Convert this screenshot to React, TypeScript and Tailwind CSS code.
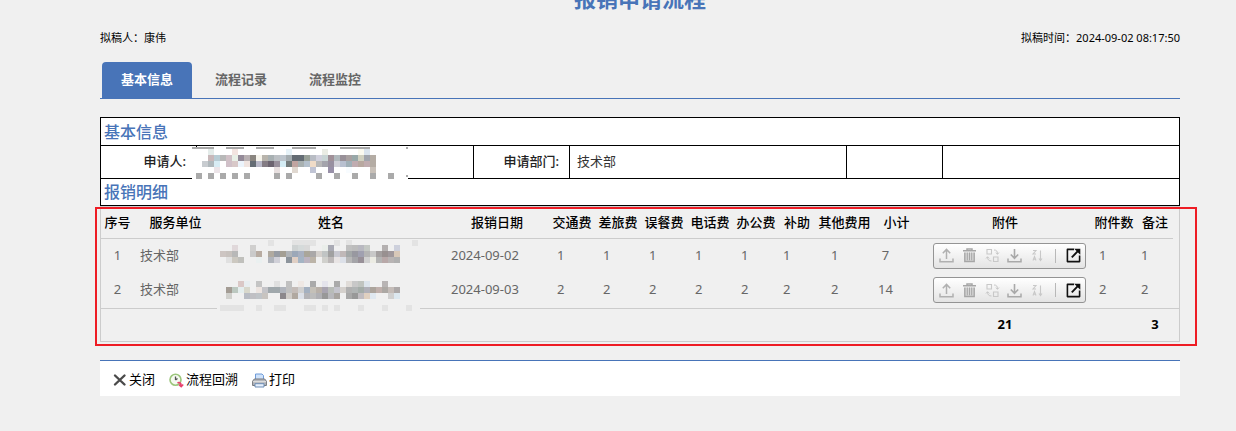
import type { ReactNode } from 'react'

type MosaicRow = { y: number; col: number; cells: string }

// each row lists its cells from left to right, "-" leaves a cell empty
const applicantMosaic: MosaicRow[] = [
  { y: 2, col: 1, cells: 'e4ecea - - - f3e4e0 - - - - - - - - e6f2f8 - - - - - eaece4 - - - - - fbfaf0 dae4ee' },
  { y: 8, col: 1, cells: 'c8b8ba b8ccd4 b8b8b8 d0c0c6 e8efe6 948a98 b8b0b2 8a8580 f6f4ec b8b4ac a8b0b2 bcc0c4 bcc4cc a4acb0 636b73 646c74 98a098 b8bcc4 d0d0dc c8d4d4 a09098 b0b8bc 989098 a8a0a0 98a8a8 d0d0c0 a0a4ac b4aca4' },
  { y: 14, col: 0, cells: 'c8ccd0 b0b8bc d8ecf4 - d0c0c8 d8c8c8 ecf4fc f0e4e0 646c74 b8b8c8 847c84 6c6470 98909c d4ecf4 747c7c c0a4a0 a8b0b0 b4c0cc f0dcc8 b8b8b8 a4a4ac 9890a0 d0d0d8 b8c0d0 a0b0b8 c0acb0 b8a8a0 c0acb0 b4aca4' },
  { y: 20, col: 2, cells: 'ece4e8 - - - - - - - - - e8e0e0 - - e0d8d0 - - c0c4d4 - - 9890a8 - - f8fcff - - - c8c0b8' },
  { y: 26, col: -1, cells: 'aaa - aaa - aaa - aaa - aaa - - - - aaa - aaa - - - - aaa - - aaa - - aaa - - aaa - - aaa' },
]

const nameMosaic: MosaicRow[] = [
  { y: 1, col: 8, cells: 'e3e3e3 - - - e3e3e3 e3e3e3 e3e3e3 e3e3e3 - - - e3e3e3 - e3e3e3 - - - - - - - - - - e3e3e3' },
  { y: 6, col: 2, cells: 'e0d8da - - d0cfce - - - - - - cfd3d3 d5dada d9d9d9 - - eaeeea a9aab4 - - c0c0c0 bcbcbc b8b8c0 c4c8c4 - - b4b0b0 - cdd0dc' },
  { y: 12, col: 0, cells: 'cdc5c2 c8c2be b8b8b8 - - cacaca b8aca2 - b0aaa0 979ca4 a49f94 b0b4b8 9ca8b8 a8b0c0 aaa69a aaa8a8 d4d0cc c0c4c4 a0a0a0 c8c8d0 c0b8b8 a4a8a8 9898a0 a0a0b0 b4b4b4 c8c8c8 a4a0a0 989090 a0989c d8c8b8' },
  { y: 18, col: 1, cells: 'e0e0e0 ccc8c0 c0c0bc - - eaf0f0 - b0b4bc d0d0d8 - 8c949c e0cfc4 a4b4c4 bcb4c0 bcb4a8 - d0d0cc bcb8b8 e8e4e4 dce0e8 b8b8b8 a4a4a8 989098 d0d0d0 ecece4 b4b4b4 b8a8a8 b8b4b4 b0b0b0' },
  { y: 42, col: 3, cells: 'dac8c6 e8eef0 - c4c4c4 - - e0e0e0 - c0c0c0 - efe8e4 - aaaaaa - e4e4ec - aaaaaa - e0dcd8 c8c8c8 c0c4c0 dce4ec - - b8b4b4' },
  { y: 48, col: 1, cells: 'a39c94 bcc8c0 e4eeee d8d8cc - ece4e0 c4c4c8 a0a8ac a0a8ac b0b4bc c0c0c0 c4bcb8 d0d0d0 a4b0c0 c4c0b8 b8b0a8 a8a4b0 b8bcb8 c4c4cc d4d0cc b0b0b0 b0b4b4 a4aca8 b0b0b8 aca49c c0b0ac aca8a4 c4bcb8 aca8a8' },
  { y: 54, col: 1, cells: 'd0d0cc - - b8bcc4 c0c0c4 c0c4c8 c8c4c0 - - 8c888c d0ccc8 b0a8a0 dce0e8 b4b4b8 bcbcbc b0b0b4 989898 b8b8bc a8a4a0 - a8a8a8 989898 c0bcc0 e0d0c0 e0e8f0 - - d0d0d0 dce8f0' },
  { y: 66, col: 0, cells: 'e3e3e3 e3e3e3 e3e3e3 e3e3e3 - - e3e3e3 - - e3e3e3 e3e3e3 - - - e3e3e3 e3e3e3 - e3e3e3 - e3e3e3 - - - e3e3e3 - - - e3e3e3 - - - e3e3e3' },
]

function MosaicCells({ rows, offset }: { rows: MosaicRow[]; offset: number }) {
  return (
    <>
      {rows.map((row) =>
        row.cells.split(' ').map((fill, i) =>
          fill === '-' ? null : (
            <rect key={`${row.y}-${i}`} x={offset + (row.col + i) * 6} y={row.y} width="6" height="6" fill={`#${fill}`} />
          ),
        ),
      )}
    </>
  )
}

const columns = [
  { label: '序号', width: 'w-[33px]' },
  { label: '服务单位', width: 'w-[83px]' },
  { label: '姓名', width: '' },
  { label: '报销日期', width: 'w-[104px]' },
  { label: '交通费', width: 'w-[46px]' },
  { label: '差旅费', width: 'w-[46px]' },
  { label: '误餐费', width: 'w-[46px]' },
  { label: '电话费', width: 'w-[46px]' },
  { label: '办公费', width: 'w-[46px]' },
  { label: '补助', width: 'w-[36px]' },
  { label: '其他费用', width: 'w-[59px]' },
  { label: '小计', width: 'w-[45px]' },
  { label: '附件', width: 'w-[172px]' },
  { label: '附件数', width: 'w-[46px]' },
  { label: '备注', width: 'w-[36px]' },
]

const feePadding = ['pl-2', 'pl-2', 'pl-2', 'pl-2', 'pl-2', 'pl-1', 'pl-4']

const records = [
  { id: 1, unit: '技术部', date: '2024-09-02', fees: [1, 1, 1, 1, 1, 1, 1], subtotal: 7, files: 1, remark: 1 },
  { id: 2, unit: '技术部', date: '2024-09-03', fees: [2, 2, 2, 2, 2, 2, 2], subtotal: 14, files: 2, remark: 2 },
]

function ToolButton({ label, children }: { label: string; children: ReactNode }) {
  return (
    <button type="button" aria-label={label} className="flex h-6 w-[23px] items-center justify-center">
      <svg width="15" height="15" viewBox="0 0 15 15" fill="none">
        {children}
      </svg>
    </button>
  )
}

function AttachmentTools() {
  return (
    <div className="ml-3.5 flex h-[26px] w-[153px] items-center rounded-[3px] border border-[#949494] bg-linear-to-b from-white to-[#e4e4e4] pl-px">
      <ToolButton label="上传">
        <path d="M7.5 11V1.5M3.8 5.2l3.7-3.8 3.7 3.8" stroke="#b0b0b0" strokeWidth="1.5" />
        <path d="M1 10.5v3.2h13v-3.2" stroke="#b0b0b0" strokeWidth="1.5" />
      </ToolButton>
      <ToolButton label="删除">
        <path d="M1 2.8h13M5 2.5V1h5v1.5" stroke="#a6a6a6" strokeWidth="1.5" />
        <path d="M2.8 4.5v9h9.4v-9" fill="#d6d6d6" stroke="#a6a6a6" strokeWidth="1.4" />
        <path d="M5.3 4.5v7.8M7.5 4.5v7.8M9.7 4.5v7.8" stroke="#a6a6a6" />
      </ToolButton>
      <ToolButton label="替换">
        <path d="M2 1.5h4.5v4.5H2zM8.5 9H13v4.5H8.5z" stroke="#c8c8c8" strokeWidth="1.1" />
        <path d="M9 2c2.5 0 3.5 1.2 3.5 4M10.7 4.5l1.8 1.8 1.5-1.8M6.5 13C4 13 2.5 11.8 2.5 9M1 10.5l1.5-1.8 1.8 1.8" stroke="#c8c8c8" />
      </ToolButton>
      <ToolButton label="下载">
        <path d="M7.5 1v9M3.8 6.5l3.7 3.8 3.7-3.8" stroke="#a9a9a9" strokeWidth="1.6" />
        <path d="M1 10.5v3.2h13v-3.2" stroke="#a9a9a9" strokeWidth="1.5" />
      </ToolButton>
      <ToolButton label="排序">
        <path d="M3 2.5h3L3 6h3M3 12.5l1.5-4 1.5 4M3.5 11.3h2M10.5 2.5V12M9 10.5l1.5 2 1.5-2" stroke="#c8c8c8" strokeWidth="1.1" />
      </ToolButton>
      <span className="mx-1.5 h-3.5 w-px bg-[#b8b8b8]" />
      <ToolButton label="打开">
        <path d="M8 1.4H1.4v12.2h12.2V7.5" stroke="#111" strokeWidth="1.6" strokeLinejoin="round" />
        <path d="M5.8 9.400l6-6.200" stroke="#111" strokeWidth="1.9" />
        <path d="M8.200.7h6.100v6.100z" fill="#111" />
      </ToolButton>
    </div>
  )
}

function CloseIcon() {
  return (
    <svg width="14" height="14" viewBox="0 0 14 14" fill="none">
      <path d="M2 2.500l9.500 9M11.500 2.500L2 11.500" stroke="#4a4a4a" strokeWidth="2.400" strokeLinecap="round" />
    </svg>
  )
}

function TraceIcon() {
  return (
    <svg width="15" height="15" viewBox="0 0 15 15" fill="none">
      <circle cx="6.5" cy="6.8" r="5.5" fill="#f6faf2" stroke="#9cc67c" strokeWidth="1.6" />
      <path d="M6.5 3.5v3.5M6.500 7l2-1.500" stroke="#555" strokeWidth="1.3" />
      <path d="M8.500 10c1.500-1 3.500-.5 3.700 2.500M10 11.700l2.200 2 2-2.200" stroke="#e8416f" strokeWidth="1.6" />
    </svg>
  )
}

function PrintIcon() {
  return (
    <svg width="15" height="15" viewBox="0 0 15 15" fill="none">
      <path d="M3.500 6.500V1h6.500l1.500 1.500v4z" fill="#cfe2fa" stroke="#6f9bd8" />
      <path d="M2.300 6h10.400l1.700 2.200v4.300H.6V8.200z" fill="#b4b7bc" stroke="#74777c" />
      <path d="M1 8.700h13" stroke="#e6e6e6" />
      <path d="M3 10.700h9v3.300H3z" fill="#e7f0fc" stroke="#6d8db5" />
    </svg>
  )
}

export default function App() {
  return (
    <div className="min-h-screen overflow-hidden bg-[#f0f0f0] pr-14 pb-9 pl-[100px] font-['Noto_Sans','Noto_Sans_CJK_SC',sans-serif] text-[13px] text-black">
      <h1 className="-mt-3.5 text-center text-[22px] leading-6 font-bold text-[#4874b8]">报销申请流程</h1>

      <div className="mt-4 flex justify-between text-[11px] leading-6">
        <span>拟稿人：康伟</span>
        <span>拟稿时间：2024-09-02 08:17:50</span>
      </div>

      {/* Tabs */}
      <nav className="mt-3 flex gap-1 border-b border-[#4874b8] pl-0.5 font-bold text-[#666]">
        <button type="button" className="h-9 rounded-t-[4px] bg-[#4874b8] px-[19px] text-white">基本信息</button>
        <button type="button" className="h-9 px-[19px]">流程记录</button>
        <button type="button" className="h-9 px-[19px]">流程监控</button>
      </nav>

      {/* Basic info */}
      <table className="mt-[18px] w-full table-fixed border-collapse bg-white">
        <colgroup>
          <col className="w-[96px]" />
          <col className="w-[277px]" />
          <col className="w-[96px]" />
          <col className="w-[277px]" />
          <col className="w-[96px]" />
          <col />
        </colgroup>
        <tbody>
          <tr className="h-7">
            <th colSpan={6} className="border border-black px-[3px] text-left text-[16px] leading-6 font-medium text-[#4874b8]">基本信息</th>
          </tr>
          <tr className="h-[33px]">
            <th className="border border-black pr-2.5 text-right font-medium text-[#222]">申请人:</th>
            <td className="relative border border-black">
              <svg className="absolute top-px -left-[5px]" width="216" height="32" viewBox="0 0 216 32" shapeRendering="crispEdges">
                <rect width="216" height="32" fill="#fff" />
                <path d="M0 1h22M34 1h18M64 1h18M100 1h24M148 1h30M214 1h2M214 29h2" stroke="#aaa" strokeWidth="2" />
                <MosaicCells rows={applicantMosaic} offset={10} />
              </svg>
            </td>
            <th className="border border-black pr-2.5 text-right font-medium text-[#222]">申请部门:</th>
            <td className="border border-black px-[7px] text-[#333]">技术部</td>
            <td className="border border-black" />
            <td className="border border-black" />
          </tr>
          <tr className="h-[27px]">
            <th colSpan={6} className="border border-black px-[3px] text-left text-[16px] leading-6 font-medium text-[#4874b8]">报销明细</th>
          </tr>
        </tbody>
      </table>

      {/* Expense details */}
      <div className="relative border border-[#ccc]">
        <table className="w-full table-fixed border-separate border-spacing-0">
          <thead>
            <tr className="h-8">
              {columns.map((column) => (
                <th key={column.label} className={`border-b border-[#ccc] p-0 font-medium whitespace-nowrap ${column.width}`}>
                  {column.label}
                </th>
              ))}
              <th className="w-1.5 p-0" />
            </tr>
          </thead>
          <tbody className="text-[#666]">
            {records.map((record, index) => (
              <tr key={record.id} className="h-[35px] *:pb-0.5 last:*:border-b last:*:border-[#ccc]">
                <td className="text-center">{record.id}</td>
                <td className="pl-1.5">{record.unit}</td>
                <td className="relative">
                  {index === 0 && (
                    <svg className="absolute top-0 left-0 z-10" width="203" height="72" viewBox="0 0 203 72" shapeRendering="crispEdges">
                      <rect width="203" height="72" fill="#f0f0f0" />
                      <MosaicCells rows={nameMosaic} offset={3} />
                    </svg>
                  )}
                </td>
                <td className="pl-1.5">{record.date}</td>
                {record.fees.map((fee, i) => (
                  <td key={i} className={feePadding[i]}>{fee}</td>
                ))}
                <td className="pr-[22px] text-center">{record.subtotal}</td>
                <td><AttachmentTools /></td>
                <td className="pl-2">{record.files}</td>
                <td className="pl-1">{record.remark}</td>
                <td />
              </tr>
            ))}
          </tbody>
          <tfoot>
            <tr className="h-8 text-center font-bold">
              <td colSpan={12} />
              <td>21</td>
              <td />
              <td>3</td>
              <td />
            </tr>
          </tfoot>
        </table>
        <div className="pointer-events-none absolute top-0 -right-[18px] -bottom-[5px] -left-1.5 border-2 border-[#ee1c24]" />
      </div>

      {/* Actions */}
      <div className="mt-[18px] flex h-9 items-center gap-3.5 border-t border-[#4874b8] bg-white pt-[3px] pl-[13px]">
        <button type="button" className="flex items-center gap-0.5"><CloseIcon />关闭</button>
        <button type="button" className="flex items-center gap-0.5"><TraceIcon />流程回溯</button>
        <button type="button" className="flex items-center gap-0.5"><PrintIcon />打印</button>
      </div>
    </div>
  )
}
